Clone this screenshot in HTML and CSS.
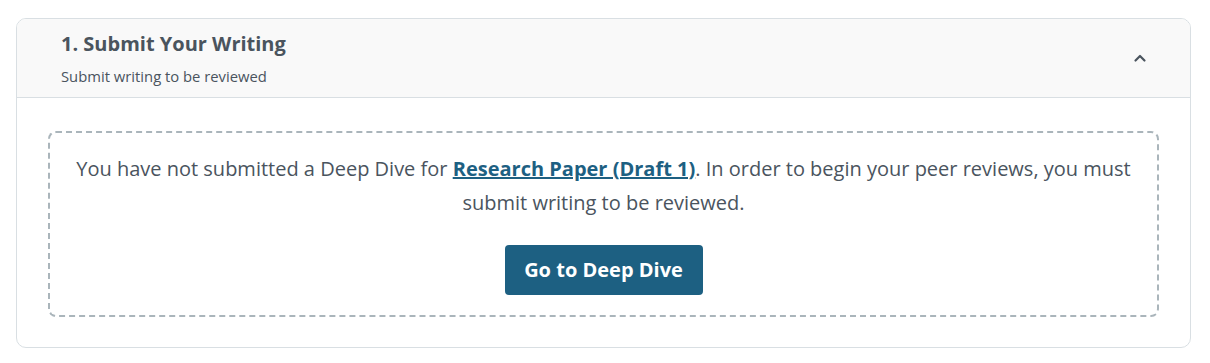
FILE: index.html
```html
<!DOCTYPE html>
<html lang="en">

<head>
  <meta charset="UTF-8">
  <meta name="viewport" content="width=device-width, initial-scale=1.0">
  <title>Submit Your Writing</title>
  <link rel="stylesheet" href="styles.css">
</head>

<body>
  <div class="step_card">
    <div class="step_head">
      <div class="step_titles">
        <h2>1. Submit Your Writing</h2>
        <p>Submit writing to be reviewed</p>
      </div>
      <a href="javascript:;" class="toggle">
        <svg width="14" height="10" viewBox="0 0 14 10">
          <path d="M2.5 7.5 L7 3 L11.5 7.5" fill="none" stroke="#4a545e" stroke-width="2.2" stroke-linecap="round" stroke-linejoin="round" />
        </svg>
      </a>
    </div>
    <div class="step_body">
      <div class="empty_box">
        <p>You have not submitted a Deep Dive for <a href="javascript:;" class="link">Research Paper (Draft 1)</a>. In order to begin your peer reviews, you must submit writing to be reviewed.</p>
        <a href="javascript:;" class="btn">Go to Deep Dive</a>
      </div>
    </div>
  </div>
</body>

</html>
```

FILE: styles.css
```css
* {
  margin: 0;
  padding: 0;
  box-sizing: border-box;
}

body {
  font-family: "Open Sans", "Liberation Sans", sans-serif;
  color: #4a545e;
  background-color: #fff;
  padding: 18px 19px 0 16px;
}

.step_card {
  border: 1px solid #d9dfe3;
  border-radius: 10px;
  overflow: hidden;
}

.step_head {
  display: flex;
  align-items: center;
  justify-content: space-between;
  height: 79px;
  padding: 0 44px;
  background-color: #f9f9f9;
  border-bottom: 1px solid #d9dfe3;
}

.step_head h2 {
  font-size: 20px;
  font-weight: 700;
  line-height: 26px;
  color: #4a545e;
}

.step_head p {
  margin-top: 10px;
  font-size: 14.8px;
  line-height: 18px;
  color: #4a545e;
}

.toggle {
  display: flex;
  margin-right: -1px;
}

.step_body {
  padding: 33px 31px 30px;
}

.empty_box {
  border: 2px dashed #aab5bb;
  border-radius: 8px;
  padding: 19px 20px 20px;
  text-align: center;
}

.empty_box p {
  font-size: 20px;
  line-height: 34px;
  color: #4a545e;
}

.link {
  color: #1d6082;
  font-weight: 700;
  text-decoration: underline;
}

.btn {
  display: inline-block;
  margin-top: 25px;
  width: 198px;
  height: 50px;
  line-height: 50px;
  border-radius: 4px;
  background-color: #1d6082;
  color: #fff;
  font-size: 20px;
  font-weight: 700;
  text-decoration: none;
}
```
